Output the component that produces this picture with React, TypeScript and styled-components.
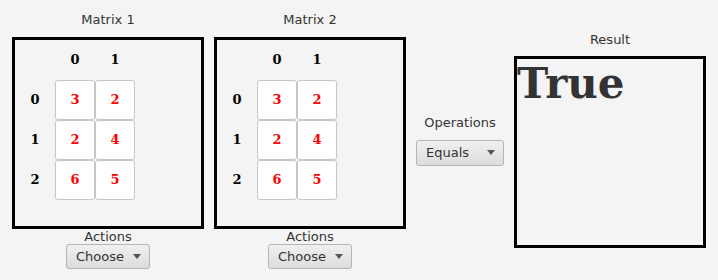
import React from "react";
import styled, { createGlobalStyle } from "styled-components";

const Global = createGlobalStyle`
  html, body { margin: 0; padding: 0; background: #f4f4f4; }
  body { font-family: "DejaVu Sans", sans-serif; font-size: 13px; color: #333333; }
`;

const Stage = styled.div`
  height: 280px;
  box-sizing: border-box;
  padding-left: 12px;
  display: flex;
  align-items: center;
  gap: 10px;
`;

const Column = styled.div<{ $width: number }>`
  width: ${(p) => p.$width}px;
  display: flex;
  flex-direction: column;
  align-items: center;
`;

const Caption = styled.div<{ $gap?: number }>`
  font-family: "DejaVu Sans", sans-serif;
  font-size: 13px;
  line-height: 15px;
  color: #333333;
  margin-bottom: ${(p) => p.$gap ?? 0}px;
  white-space: nowrap;
`;

const FrameBox = styled.div`
  width: 192px;
  height: 192px;
  box-sizing: border-box;
  border: 3px solid #000;
  background: #f4f4f4;
`;

const Grid = styled.div`
  display: grid;
  grid-template-columns: repeat(3, 40px);
  grid-auto-rows: 40px;
`;

const Heading = styled.div`
  display: flex;
  align-items: center;
  justify-content: center;
  font-family: "DejaVu Serif", serif;
  font-weight: bold;
  font-size: 13px;
  color: #000;
`;

const Cell = styled.div`
  box-sizing: border-box;
  width: 40px;
  height: 40px;
  display: flex;
  align-items: center;
  justify-content: center;
  background: #fff;
  border: 1px solid #c6c6c6;
  border-radius: 3px;
  font-family: "DejaVu Serif", serif;
  font-weight: bold;
  font-size: 13px;
  color: #ff0000;
`;

const Combo = styled.div<{ $width: number; $height: number }>`
  box-sizing: border-box;
  width: ${(p) => p.$width}px;
  height: ${(p) => p.$height}px;
  display: flex;
  align-items: center;
  justify-content: space-between;
  padding: 0 8px 0 9px;
  border: 1px solid #b4b4b4;
  border-radius: 3px;
  background: linear-gradient(#f0f0f0, #dcdcdc);
  font-family: "DejaVu Sans", sans-serif;
  font-size: 13px;
  color: #333333;
`;

const Arrow = styled.span`
  width: 0;
  height: 0;
  border-left: 4px solid transparent;
  border-right: 4px solid transparent;
  border-top: 5px solid #555;
`;

const ResultText = styled.div`
  font-family: "DejaVu Serif", serif;
  font-weight: bold;
  font-size: 42px;
  color: #333333;
  line-height: normal;
`;

const Dropdown = ({ label, width, height }: { label: string; width: number; height: number }) => (
  <Combo $width={width} $height={height}>
    <span>{label}</span>
    <Arrow />
  </Combo>
);

const data = [
  [3, 2],
  [2, 4],
  [6, 5],
];

const Matrix = ({ title }: { title: string }) => (
  <Column $width={192}>
    <Caption $gap={10}>{title}</Caption>
    <FrameBox>
      <Grid>
        <div />
        <Heading>0</Heading>
        <Heading>1</Heading>
        {data.map((row, r) => (
          <React.Fragment key={r}>
            <Heading>{r}</Heading>
            {row.map((v, c) => (
              <Cell key={c}>{v}</Cell>
            ))}
          </React.Fragment>
        ))}
      </Grid>
    </FrameBox>
    <Caption>Actions</Caption>
    <Dropdown label="Choose" width={84} height={25} />
  </Column>
);

export default function App() {
  return (
    <>
      <Global />
      <Stage>
        <Matrix title="Matrix 1" />
        <Matrix title="Matrix 2" />
        <Column $width={88}>
          <Caption $gap={10}>Operations</Caption>
          <Dropdown label="Equals" width={88} height={26} />
        </Column>
        <Column $width={192}>
          <Caption $gap={9}>Result</Caption>
          <FrameBox>
            <ResultText>True</ResultText>
          </FrameBox>
        </Column>
      </Stage>
    </>
  );
}
